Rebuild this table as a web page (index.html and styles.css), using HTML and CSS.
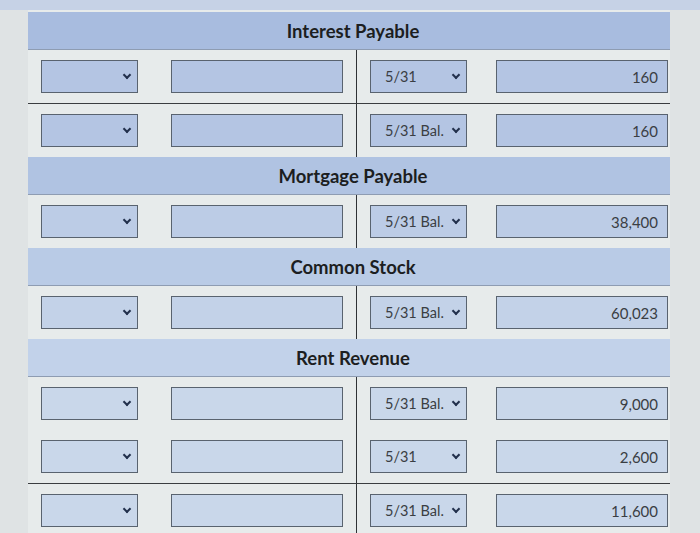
FILE: index.html
```html
<!DOCTYPE html>
<html>
<head>
<meta charset="utf-8">
<link rel="stylesheet" href="styles.css">
</head>
<body>
<div class="topband"></div>
<div class="sheet">
  <section class="acct acct--1">
    <div class="acct__title">Interest Payable</div>
    <div class="row">
      <div class="cell cell--left"><div class="sel"><span></span><i class="chev"></i></div><div class="inp"></div></div>
      <div class="cell cell--right"><div class="sel"><span>5/31</span><i class="chev"></i></div><div class="inp">160</div></div>
    </div>
    <div class="row row--total">
      <div class="cell cell--left"><div class="sel"><span></span><i class="chev"></i></div><div class="inp"></div></div>
      <div class="cell cell--right"><div class="sel"><span>5/31 Bal.</span><i class="chev"></i></div><div class="inp">160</div></div>
    </div>
  </section>
  <section class="acct acct--2">
    <div class="acct__title">Mortgage Payable</div>
    <div class="row">
      <div class="cell cell--left"><div class="sel"><span></span><i class="chev"></i></div><div class="inp"></div></div>
      <div class="cell cell--right"><div class="sel"><span>5/31 Bal.</span><i class="chev"></i></div><div class="inp">38,400</div></div>
    </div>
  </section>
  <section class="acct acct--3">
    <div class="acct__title">Common Stock</div>
    <div class="row">
      <div class="cell cell--left"><div class="sel"><span></span><i class="chev"></i></div><div class="inp"></div></div>
      <div class="cell cell--right"><div class="sel"><span>5/31 Bal.</span><i class="chev"></i></div><div class="inp">60,023</div></div>
    </div>
  </section>
  <section class="acct acct--4">
    <div class="acct__title">Rent Revenue</div>
    <div class="row">
      <div class="cell cell--left"><div class="sel"><span></span><i class="chev"></i></div><div class="inp"></div></div>
      <div class="cell cell--right"><div class="sel"><span>5/31 Bal.</span><i class="chev"></i></div><div class="inp">9,000</div></div>
    </div>
    <div class="row">
      <div class="cell cell--left"><div class="sel"><span></span><i class="chev"></i></div><div class="inp"></div></div>
      <div class="cell cell--right"><div class="sel"><span>5/31</span><i class="chev"></i></div><div class="inp">2,600</div></div>
    </div>
    <div class="row row--total">
      <div class="cell cell--left"><div class="sel"><span></span><i class="chev"></i></div><div class="inp"></div></div>
      <div class="cell cell--right"><div class="sel"><span>5/31 Bal.</span><i class="chev"></i></div><div class="inp">11,600</div></div>
    </div>
  </section>
</div>
</body>
</html>
```
FILE: styles.css
```css
* { box-sizing: border-box; }
html, body {
  margin: 0;
  padding: 0;
  background: #dfe3e4;
  font-family: Lato, "Liberation Sans", sans-serif;
  color: #2e3134;
  overflow: hidden;
}
.topband {
  height: 10px;
  background: #c6d2e6;
}
.sheet {
  margin-left: 28px;
  width: 642px;
  padding-top: 2px;
  background: #e7ebeb;
}
.acct__title {
  height: 38px;
  display: flex;
  align-items: center;
  justify-content: center;
  padding-left: 8px;
  font-size: 18.5px;
  font-weight: 700;
  color: #1c1e21;
  background: #a8bcdf;
  border-bottom: 1px solid #8e9cb2;
}
.row {
  display: grid;
  grid-template-columns: 329px 1fr;
}
.row--total {
  border-top: 1px solid #3a3d40;
}
.cell {
  display: flex;
  align-items: center;
  height: 53px;
  padding-left: 13px;
}
.cell--left {
  border-right: 1.5px solid #2f3235;
  gap: 33px;
}
.cell--right {
  gap: 29px;
}
.sel {
  width: 97px;
  height: 33px;
  display: flex;
  align-items: center;
  justify-content: space-between;
  padding: 0 7px 0 14px;
  background: #b4c5e3;
  border: 1px solid #59636f;
  font-size: 14.5px;
  color: #3a3e43;
}
.chev {
  width: 6px;
  height: 6px;
  border-right: 2px solid #22304c;
  border-bottom: 2px solid #22304c;
  transform: translateY(-2px) rotate(45deg);
}
.inp {
  width: 172px;
  height: 33px;
  display: flex;
  align-items: center;
  justify-content: flex-end;
  padding-right: 9px;
  background: #b4c5e3;
  border: 1px solid #59636f;
  font-size: 15px;
  color: #3a3e43;
}
.acct--2 .acct__title { background: #b0c3e2; }
.acct--2 .sel, .acct--2 .inp { background: #bccce6; }
.acct--3 .acct__title { background: #b9cbe6; }
.acct--3 .sel, .acct--3 .inp { background: #c3d2e8; }
.acct--4 .acct__title { background: #c2d2ea; }
.acct--4 .sel, .acct--4 .inp { background: #c9d7ea; }
```
